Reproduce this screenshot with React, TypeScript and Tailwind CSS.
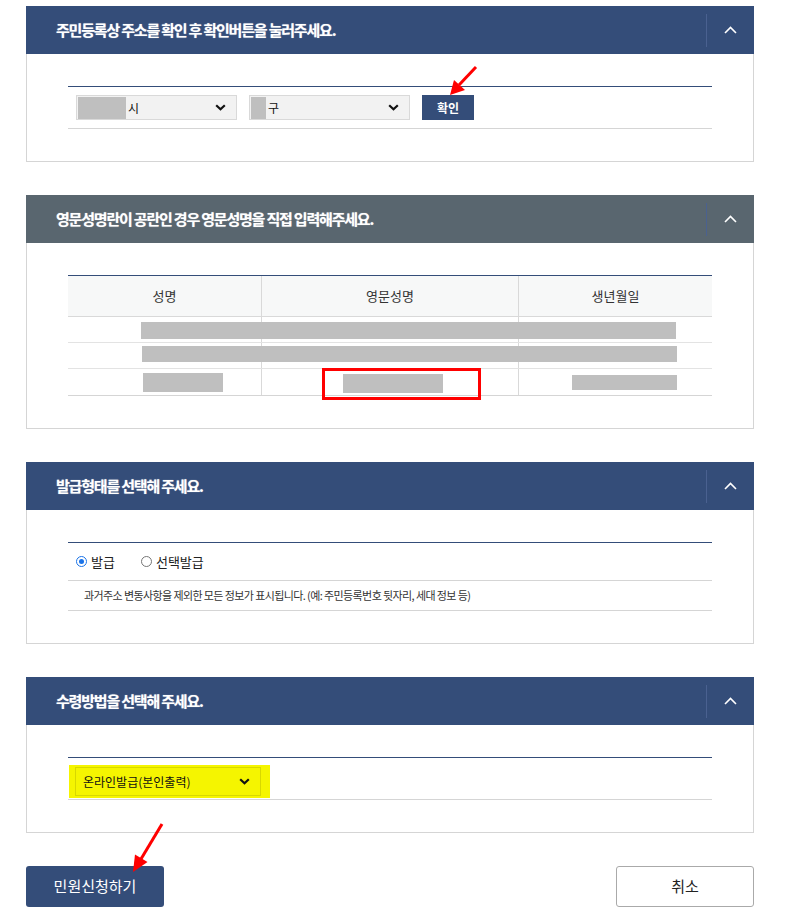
import { ReactNode } from "react";

const font = { fontFamily: '"Noto Sans CJK KR", "Noto Sans", sans-serif' };

const ChevronUp = () => (
  <svg width="13" height="8" viewBox="0 0 13 8" fill="none">
    <path d="M1 7 L6.5 1.5 L12 7" stroke="white" strokeWidth="1.6" />
  </svg>
);

const ChevronDown = () => (
  <svg width="11" height="7" viewBox="0 0 11 7" fill="none">
    <path d="M1.2 1.2 L5.5 5.3 L9.8 1.2" stroke="#111" strokeWidth="2.2" />
  </svg>
);

interface PanelProps {
  title: string;
  tone?: "navy" | "gray";
  children: ReactNode;
}

const Panel = ({ title, tone = "navy", children }: PanelProps) => (
  <section>
    <div
      className={`flex h-[48px] items-center justify-between ${
        tone === "navy" ? "bg-[#344d79]" : "bg-[#59666f]"
      }`}
    >
      <h2 className="pl-[30px] text-[15px] font-bold tracking-[-1.2px] text-white [text-shadow:0_0_1px_rgba(255,255,255,0.6)]">
        {title}
      </h2>
      <div className="flex h-[33px] w-[48px] items-center justify-center border-l border-[#4a6190]">
        <ChevronUp />
      </div>
    </div>
    <div className="border-x border-b border-[#d5d5d5] px-[41px] pt-[32px] pb-[32px]">
      <div className="border-t border-[#344d79]">{children}</div>
    </div>
  </section>
);

const FakeSelect = ({ block, label }: { block: number; label: string }) => (
  <div className="flex h-[25px] w-[161px] items-center border border-[#d9d9d9] bg-[#f2f2f2] pr-[10px] pl-[1px] text-[12px] text-[#111]">
    <span className="h-[22px] bg-[#bfbfbf]" style={{ width: block }} />
    <span className="ml-[2px] flex-1">{label}</span>
    <ChevronDown />
  </div>
);

const Radio = ({ checked }: { checked?: boolean }) =>
  checked ? (
    <span className="flex h-[11px] w-[11px] items-center justify-center rounded-full border-[1.5px] border-[#1a73e8] bg-white">
      <span className="h-[5px] w-[5px] rounded-full bg-[#1a73e8]" />
    </span>
  ) : (
    <span className="h-[11px] w-[11px] rounded-full border border-[#767676] bg-white" />
  );

const Redact = ({ w, h = 17 }: { w: number; h?: number }) => (
  <span className="inline-block bg-[#bfbfbf]" style={{ width: w, height: h }} />
);

export default function App() {
  return (
    <div className="relative min-h-[922px] w-[793px] bg-white" style={font}>
      <div className="ml-[26px] flex w-[728px] flex-col gap-[33px] pt-[6px]">
        <Panel title="주민등록상 주소를 확인 후 확인버튼을 눌러주세요.">
          <div className="flex items-center gap-[12px] border-b border-[#d5d5d5] px-[8px] py-[8px]">
            <FakeSelect block={48} label="시" />
            <FakeSelect block={15} label="구" />
            <button className="h-[25px] w-[52px] bg-[#344d79] text-[12px] font-bold text-white">
              확인
            </button>
          </div>
        </Panel>

        <Panel title="영문성명란이 공란인 경우 영문성명을 직접 입력해주세요." tone="gray">
          <div className="text-[13px] text-[#333]">
            <div className="grid h-[41px] grid-cols-[193px_257px_194px] border-b border-[#d9d9d9] bg-[#f7f8f8]">
              <div className="flex items-center justify-center">성명</div>
              <div className="flex items-center justify-center border-l border-[#d9d9d9]">영문성명</div>
              <div className="flex items-center justify-center border-l border-[#d9d9d9]">생년월일</div>
            </div>
            <div className="relative grid h-[26px] grid-cols-[193px_257px_194px] border-b border-[#e3e3e3]">
              <div />
              <div className="border-l border-[#d9d9d9]" />
              <div className="border-l border-[#d9d9d9]" />
              <span className="absolute top-[5px] left-[73px] h-[17px] w-[535px] bg-[#bfbfbf]" />
            </div>
            <div className="relative grid h-[26px] grid-cols-[193px_257px_194px] border-b border-[#e3e3e3]">
              <div />
              <div className="border-l border-[#d9d9d9]" />
              <div className="border-l border-[#d9d9d9]" />
              <span className="absolute top-[3px] left-[74px] h-[16px] w-[535px] bg-[#bfbfbf]" />
            </div>
            <div className="grid h-[27px] grid-cols-[193px_257px_194px] border-b border-[#d5d5d5]">
              <div className="flex items-center pl-[75px]">
                <Redact w={80} h={19} />
              </div>
              <div className="flex items-center border-l border-[#d9d9d9] pt-[2px] pl-[81px]">
                <Redact w={100} h={19} />
              </div>
              <div className="flex items-center border-l border-[#d9d9d9] pl-[53px]">
                <Redact w={105} h={15} />
              </div>
            </div>
          </div>
        </Panel>

        <Panel title="발급형태를 선택해 주세요.">
          <div className="text-[#222]">
            <div className="flex h-[38px] items-center border-b border-[#d5d5d5] pl-[8px] text-[13px]">
              <label className="flex items-center gap-[4px]">
                <Radio checked />
                <span>발급</span>
              </label>
              <label className="ml-[26px] flex items-center gap-[4px]">
                <Radio />
                <span>선택발급</span>
              </label>
            </div>
            <div className="flex h-[30px] items-center border-b border-[#d5d5d5] pl-[16px] text-[11px] tracking-[-0.6px] text-[#333]">
              과거주소 변동사항을 제외한 모든 정보가 표시됩니다. (예: 주민등록번호 뒷자리, 세대 정보 등)
            </div>
          </div>
        </Panel>

        <Panel title="수령방법을 선택해 주세요.">
          <div className="flex h-[42px] items-start border-b border-[#d5d5d5] pt-[7px]">
            <div className="ml-[1px] flex h-[33px] w-[201px] items-center bg-[#f5f500] px-[6px]">
              <div className="flex h-[29px] w-[186px] items-center justify-between border border-[#d8d800] bg-[#f5f500] pr-[10px] pl-[7px] text-[12px] text-[#111]">
                <span>온라인발급(본인출력)</span>
                <ChevronDown />
              </div>
            </div>
          </div>
        </Panel>

        <div className="flex items-center justify-between">
          <button className="h-[41px] w-[138px] rounded-[3px] bg-[#344d79] text-[15px] text-white">
            민원신청하기
          </button>
          <button className="h-[41px] w-[138px] rounded-[3px] border border-[#aaaaaa] bg-white text-[15px] text-[#222]">
            취소
          </button>
        </div>
      </div>

      <svg
        className="pointer-events-none absolute top-0 left-0"
        width="793"
        height="922"
        viewBox="0 0 793 922"
      >
        <rect x="323.5" y="369.5" width="156" height="29" fill="none" stroke="#ff0000" strokeWidth="3" />
        <line x1="476" y1="67" x2="459" y2="85" stroke="#ff0000" strokeWidth="3" />
        <polygon points="450,95 465,90 454,80" fill="#ff0000" />
        <line x1="162" y1="824" x2="141" y2="859" stroke="#ff0000" strokeWidth="3" />
        <polygon points="133,872 147.5,862 135,854.5" fill="#ff0000" />
      </svg>
    </div>
  );
}
